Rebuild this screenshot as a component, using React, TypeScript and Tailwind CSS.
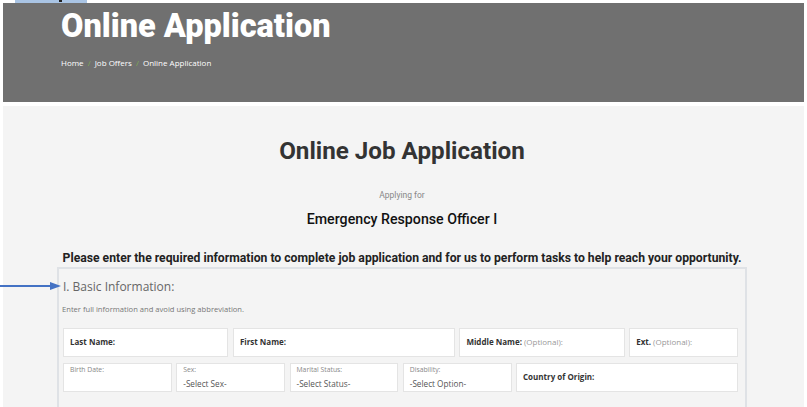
import React from 'react';

const roboto = "font-['Roboto',sans-serif]";
const openSans = "font-['Open_Sans',sans-serif]";

function Field({ span, children }: { span: string; children: React.ReactNode }) {
  return (
    <div className={`${span} h-[29px] bg-white border border-[#e4e4e4] flex items-center px-[6px] text-[8px] font-bold text-[#333]`}>
      {children}
    </div>
  );
}

function SelectField({ span, label, value }: { span: string; label: string; value?: string }) {
  return (
    <div className={`${span} h-[29px] bg-white border border-[#e4e4e4] flex flex-col px-[6px] pt-[2px]`}>
      <span className="text-[6.8px] leading-[8px] text-[#888]">{label}</span>
      {value && <span className="mt-[4px] text-[8.2px] leading-[11px] text-[#555]">{value}</span>}
    </div>
  );
}

export default function App() {
  return (
    <div className={`relative min-h-screen bg-white p-[3px] ${openSans}`}>
      {/* cropped toolbar bit at very top */}
      <div className="absolute left-[15px] top-0 h-[3px] w-[72px] bg-[#a9c4e4]">
        <div className="absolute left-[44px] top-0 h-[2px] w-[3px] bg-[#222]" />
      </div>

      <header className="h-[99px] bg-[#707070]">
        <div className="w-[690px] ml-[54px] pl-[4px] pt-[7px]">
          <h1 className={`${roboto} text-[32.5px] leading-none font-black text-white`}>Online Application</h1>
          <div className="mt-[15px] text-[8px] leading-[10px] text-white">
            Home <span className="text-[#7dab52] mx-[2px]">/</span> Job Offers{' '}
            <span className="text-[#7dab52] mx-[2px]">/</span> Online Application
          </div>
        </div>
      </header>

      <main className="mt-[4px] bg-[#f4f4f4] pb-10">
        <div className="w-[690px] ml-[54px]">
          <h2 className={`${roboto} pt-[33px] text-center text-[24.2px] leading-none font-bold text-[#333]`}>
            Online Job Application
          </h2>
          <p className={`${roboto} mt-[26px] text-center text-[8.5px] leading-[12px] text-[#888]`}>Applying for</p>
          <p className={`${roboto} mt-[11px] text-center text-[14.2px] leading-none font-medium text-[#111]`}>
            Emergency Response Officer I
          </p>
          <p className={`${roboto} mt-[26px] whitespace-nowrap text-center text-[12.2px] leading-none font-bold text-[#222]`}>
            Please enter the required information to complete job application and for us to perform tasks to help reach your opportunity.
          </p>

          <section className="relative mt-[2px] border-2 border-[#dfe2e6] pl-[4px] pr-[7px] pb-[40px]">
            <div className="pt-[10px] text-[12px] leading-4 text-[#666]">I. Basic Information:</div>
            <div className="mt-[9px] -ml-[1px] text-[7.6px] leading-[10px] text-[#777]">
              Enter full information and avoid using abbreviation.
            </div>

            <div className="mt-[14px] grid grid-cols-12 gap-x-[4.5px] gap-y-[6px]">
              <Field span="col-span-3">Last Name:</Field>
              <Field span="col-span-4">First Name:</Field>
              <Field span="col-span-3">
                Middle Name:<span className="ml-[2px] font-normal text-[#999]">(Optional):</span>
              </Field>
              <Field span="col-span-2">
                Ext.<span className="ml-[2px] font-normal text-[#999]">(Optional):</span>
              </Field>

              <SelectField span="col-span-2" label="Birth Date:" />
              <SelectField span="col-span-2" label="Sex:" value="-Select Sex-" />
              <SelectField span="col-span-2" label="Marital Status:" value="-Select Status-" />
              <SelectField span="col-span-2" label="Disability:" value="-Select Option-" />
              <Field span="col-span-4">Country of Origin:</Field>
            </div>
          </section>
        </div>
      </main>

      {/* annotation arrow pointing at the section title */}
      <svg className="absolute left-0 top-[280px]" width="62" height="12" viewBox="0 0 62 12">
        <line x1="0" y1="6" x2="52" y2="6" stroke="#4472c4" strokeWidth="2" />
        <path d="M50 2 L61 6 L50 10 Z" fill="#4472c4" />
      </svg>
    </div>
  );
}
